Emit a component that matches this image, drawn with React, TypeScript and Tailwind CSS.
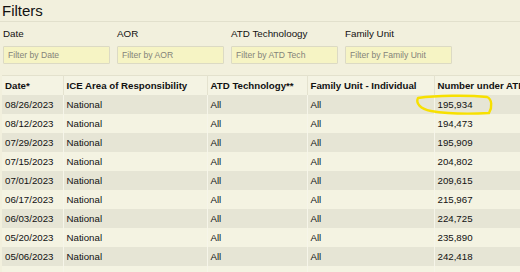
const rows = [
  ["08/26/2023", "195,934"],
  ["08/12/2023", "194,473"],
  ["07/29/2023", "195,909"],
  ["07/15/2023", "204,802"],
  ["07/01/2023", "209,615"],
  ["06/17/2023", "215,967"],
  ["06/03/2023", "224,725"],
  ["05/20/2023", "235,890"],
  ["05/06/2023", "242,418"],
  ["04/22/2023", "251,446"],
];

const filters = [
  { label: "Date", placeholder: "Filter by Date" },
  { label: "AOR", placeholder: "Filter by AOR" },
  { label: "ATD Technoloogy", placeholder: "Filter by ATD Tech" },
  { label: "Family Unit", placeholder: "Filter by Family Unit" },
];

const cell = "p-0 pl-[3px] h-[19px] leading-[19px] whitespace-nowrap overflow-hidden text-left";

export default function App() {
  return (
    <div className="relative w-[520px] h-[272px] overflow-hidden bg-[#f2f0dd] font-['Liberation_Sans',Arial,sans-serif] text-[#111]">
      {/* title */}
      <div className="pt-[3px] pb-[2px] pl-[2px] border-b border-[#e2e0cc]">
        <h1 className="text-[15px] leading-[16px] font-normal">Filters</h1>
      </div>

      {/* filter inputs */}
      <div className="flex gap-[7px] pl-[3px] pt-[6px]">
        {filters.map((f) => (
          <div key={f.label} className="w-[107px] flex flex-col gap-[6px]">
            <label className="text-[9.8px] leading-[12px]">{f.label}</label>
            <input
              readOnly
              placeholder={f.placeholder}
              className="h-[18px] w-full bg-[#f6f4c4] border border-[#dcdac4] rounded-[1px] pl-[4px] text-[8.6px] placeholder:text-[#84837a] outline-none"
            />
          </div>
        ))}
      </div>

      {/* table */}
      <div className="mt-[11px] pl-[2px]">
        <table className="table-fixed border-collapse w-[580px] text-[9.7px]">
          <colgroup>
            <col className="w-[61px]" />
            <col className="w-[144px]" />
            <col className="w-[100px]" />
            <col className="w-[127px]" />
            <col className="w-[148px]" />
          </colgroup>
          <thead>
            <tr className="bg-[#f4f3e3] border-t border-[#e3e1cd] font-bold">
              <th className={cell}>Date*</th>
              <th className={`${cell} border-l border-[#e4e2cf]`}>ICE Area of Responsibility</th>
              <th className={`${cell} border-l border-[#e4e2cf]`}>ATD Technology**</th>
              <th className={`${cell} border-l border-[#e4e2cf]`}>Family Unit - Individual</th>
              <th className={`${cell} border-l border-[#e4e2cf]`}>Number under ATD</th>
            </tr>
          </thead>
          <tbody>
            {rows.map(([date, num], i) => (
              <tr key={date} className={i % 2 === 0 ? "bg-[#e6e5d5]" : "bg-[#f4f3e2]"}>
                <td className={cell}>{date}</td>
                <td className={`${cell} border-l border-[#f6f5e9]`}>National</td>
                <td className={`${cell} border-l border-[#f6f5e9]`}>All</td>
                <td className={`${cell} border-l border-[#f6f5e9]`}>All</td>
                <td className={`${cell} border-l border-[#f6f5e9]`}>{num}</td>
              </tr>
            ))}
          </tbody>
        </table>
      </div>

      {/* hand-drawn highlight */}
      <svg className="absolute left-0 top-0 pointer-events-none" width="520" height="272">
        <path
          d="M418,98 C436,95.5 468,95 487,97 C492,99 492.5,107 489,113 C470,114 446,113.5 431,111 C420,109 415.5,103 418,98"
          fill="none"
          stroke="#f7e000"
          strokeWidth="2.4"
          strokeLinecap="round"
        />
      </svg>
    </div>
  );
}
